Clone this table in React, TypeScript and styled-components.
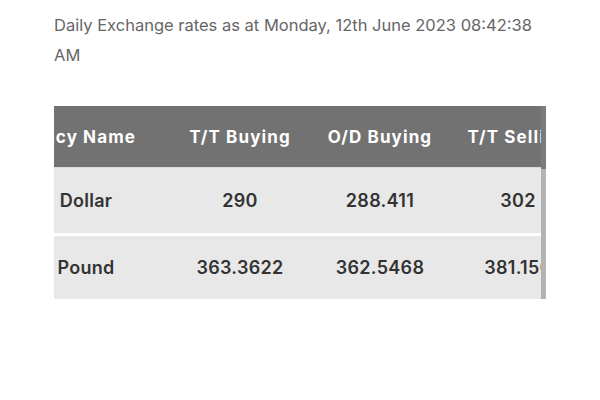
import React, { useLayoutEffect, useRef } from "react";
import styled, { createGlobalStyle } from "styled-components";

const GlobalStyle = createGlobalStyle`
  html, body { margin: 0; padding: 0; background: #ffffff; }
  body { font-family: Inter, "Open Sans", sans-serif; }
`;

const Page = styled.div`
  width: 600px;
  padding: 10px 54px 0;
  box-sizing: border-box;
`;

const Title = styled.p`
  margin: 0;
  font-size: 16.5px;
  line-height: 30px;
  color: #666666;
  font-weight: 400;
`;

const Frame = styled.div`
  position: relative;
  margin-top: 36px;
  width: 492px;
`;

const Viewport = styled.div`
  width: 100%;
  overflow: hidden;
`;

const Table = styled.table<{ $w: number }>`
  width: ${(p) => p.$w}px;
  border-collapse: separate;
  border-spacing: 0;
  table-layout: fixed;
`;

const HeadCell = styled.th<{ $w: number }>`
  width: ${(p) => p.$w}px;
  height: 62px;
  padding: 0;
  box-sizing: border-box;
  background: #727272;
  color: #ffffff;
  font-size: 17px;
  font-weight: 700;
  letter-spacing: 1.1px;
  white-space: nowrap;
  border-bottom: 1px solid #dcdcdc;
`;

const HeadLabel = styled.div<{ $justify?: string; $padR?: number }>`
  display: flex;
  justify-content: ${(p) => p.$justify || "center"};
  padding-right: ${(p) => p.$padR || 0}px;
`;

const Row = styled.tr`
  &:not(:last-child) td { border-bottom: 3px solid #ffffff; height: 65px; }
`;

const Cell = styled.td`
  height: 63px;
  padding: 0;
  background: #e8e8e8;
  color: #333333;
  font-size: 18px;
  font-weight: 600;
  letter-spacing: 0.3px;
  text-align: center;
  white-space: nowrap;
`;

const EdgeBar = styled.div`
  position: absolute;
  top: 0;
  right: 0;
  bottom: 0;
  width: 5px;
  background: linear-gradient(#7b7b7b 0 63px, #b3b3b3 63px);
`;

const columns = [
  { name: "Currency Name", w: 168, justify: "flex-end", padR: 34 },
  { name: "T/T Buying", w: 140 },
  { name: "O/D Buying", w: 140 },
  { name: "T/T Selling", w: 136 },
  { name: "O/D Selling", w: 140 },
];

const rows = [
  ["Dollar", "290", "288.411", "302", "302"],
  ["Pound", "363.3622", "362.5468", "381.150", "381.150"],
];

const total = columns.reduce((s, c) => s + c.w, 0);

export default function App() {
  const ref = useRef<HTMLDivElement>(null);
  useLayoutEffect(() => {
    if (ref.current) ref.current.scrollLeft = 52;
  }, []);
  return (
    <>
      <GlobalStyle />
      <Page>
        <Title>Daily Exchange rates as at Monday, 12th June 2023 08:42:38 AM</Title>
        <Frame>
          <Viewport ref={ref}>
            <Table $w={total}>
              <thead>
                <tr>
                  {columns.map((c) => (
                    <HeadCell key={c.name} $w={c.w}>
                      <HeadLabel $justify={c.justify} $padR={c.padR}>
                        {c.name}
                      </HeadLabel>
                    </HeadCell>
                  ))}
                </tr>
              </thead>
              <tbody>
                {rows.map((r) => (
                  <Row key={r[0]}>
                    {r.map((v, i) => (
                      <Cell key={i}>{v}</Cell>
                    ))}
                  </Row>
                ))}
              </tbody>
            </Table>
          </Viewport>
          <EdgeBar />
        </Frame>
      </Page>
    </>
  );
}
